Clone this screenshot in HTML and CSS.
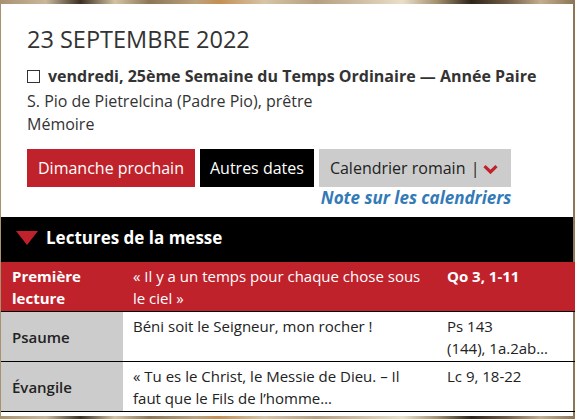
FILE: index.html
```html
<!DOCTYPE html>
<html lang="fr">
<head>
<meta charset="utf-8">
<title>23 septembre 2022</title>
<link rel="stylesheet" href="styles.css">
</head>
<body>
<div class="card">
  <div class="head">
    <h1 class="date">23 SEPTEMBRE 2022</h1>
    <div class="day"><span class="box"></span><b>vendredi, 25ème Semaine du Temps Ordinaire — Année Paire</b></div>
    <div class="saint">S. Pio de Pietrelcina (Padre Pio), prêtre</div>
    <div class="rank">Mémoire</div>
    <div class="actions">
      <a class="btn btn-red">Dimanche prochain</a>
      <a class="btn btn-black">Autres dates</a>
      <div class="cal">
        <a class="btn btn-grey">Calendrier romain <span class="bar">|</span><svg class="chev" width="15" height="10" viewBox="0 0 15 10"><path d="M1.5 2.2 L7.5 8 L13.5 2.2" fill="none" stroke="#c0222c" stroke-width="3.2"/></svg></a>
        <a class="note">Note sur les calendriers</a>
      </div>
    </div>
  </div>
  <div class="section-title"><svg class="tri" width="22" height="14" viewBox="0 0 22 14"><path d="M0 0 H22 L11 14 Z" fill="#c0222c"/></svg>Lectures de la messe</div>
  <table class="readings">
    <tr class="first">
      <td class="kind">Première lecture</td>
      <td class="title">« Il y a un temps pour chaque chose sous le ciel »</td>
      <td class="ref">Qo 3, 1-11</td>
    </tr>
    <tr>
      <td class="kind">Psaume</td>
      <td class="title">Béni soit le Seigneur, mon rocher !</td>
      <td class="ref">Ps 143<br>(144), 1a.2ab…</td>
    </tr>
    <tr>
      <td class="kind">Évangile</td>
      <td class="title">« Tu es le Christ, le Messie de Dieu. – Il faut que le Fils de l’homme…</td>
      <td class="ref">Lc 9, 18-22</td>
    </tr>
  </table>
</div>
</body>
</html>
```
FILE: styles.css
```css
html, body {
  margin: 0;
  padding: 0;
}
body {
  width: 575px;
  height: 419px;
  overflow: hidden;
  font-family: "Open Sans", "Liberation Sans", sans-serif;
  color: #333;
  background:
    linear-gradient(90deg, #a8916e 0%, #c9b79b 8%, #3c3024 14%, #d3c2a2 20%, #8c7656 26%, #bba27e 34%, #c48f55 38%, #d6c4a6 46%, #b59f80 55%, #cdbba0 62%, #e9dfc9 70%, #a3906f 76%, #2e241b 82%, #6e5a44 88%, #c2ad8d 94%, #8c7556 100%);
  padding-top: 4px;
  box-sizing: border-box;
}
.card {
  margin-left: 1px;
  width: 572px;
  background: #fff;
  height: 412px;
}
.head {
  padding: 22px 26px 8px 26px;
}
.date {
  margin: 0;
  font-size: 23.5px;
  font-weight: 400;
  line-height: 27px;
  color: #333;
}
.day {
  margin-top: 12px;
  margin-bottom: 2px;
  font-size: 16px;
  line-height: 23px;
  display: flex;
  align-items: center;
}
.box {
  display: inline-block;
  width: 11px;
  height: 11px;
  border: 1px solid #333;
  margin-right: 8px;
  margin-top: -1px;
}
.saint, .rank {
  font-size: 16px;
  line-height: 23px;
}
.actions {
  margin-top: 13px;
  display: flex;
  align-items: flex-start;
  gap: 5px;
}
.btn {
  display: block;
  font-size: 16px;
  line-height: 24px;
  padding: 7px 11px;
  white-space: nowrap;
}
.btn-red {
  background: #c0222c;
  color: #fff;
}
.btn-black {
  background: #000;
  color: #fff;
  padding: 7px 10px;
}
.btn-grey {
  background: #ccc;
  color: #222;
  padding-right: 13px;
}
.bar {
  margin-left: 1px;
  margin-right: 4px;
}
.chev {
  vertical-align: 0;
}
.cal {
  display: flex;
  flex-direction: column;
  align-items: flex-end;
}
.note {
  font-size: 17px;
  line-height: 22px;
  font-weight: 700;
  font-style: italic;
  color: #337ab7;
}
.section-title {
  background: #000;
  color: #fff;
  font-size: 17px;
  font-weight: 700;
  line-height: 25px;
  padding: 8px 10px 12px 15px;
  display: flex;
  align-items: center;
}
.tri {
  margin-right: 8px;
}
.readings {
  border-collapse: collapse;
  width: 574px;
  font-size: 15px;
  line-height: 22px;
  table-layout: fixed;
}
.readings td {
  vertical-align: top;
  padding: 3px 10px 2px 10px;
  border-bottom: 1px solid #000;
}
.readings td.kind {
  width: 101px;
  padding-left: 11px;
  background: #ccc;
  font-weight: 600;
  font-size: 15px;
  vertical-align: middle;
}
.readings td.title {
  width: 294px;
}
.readings td.ref {
  width: 118px;
  font-weight: 500;
}
.readings tr:not(.first) td {
  color: #222;
}
.readings tr.first td {
  background: #c0222c;
  color: #fff;
  vertical-align: top;
}
.readings tr.first td.kind {
  font-weight: 700;
}
.readings tr.first td.ref {
  font-weight: 700;
}
```
